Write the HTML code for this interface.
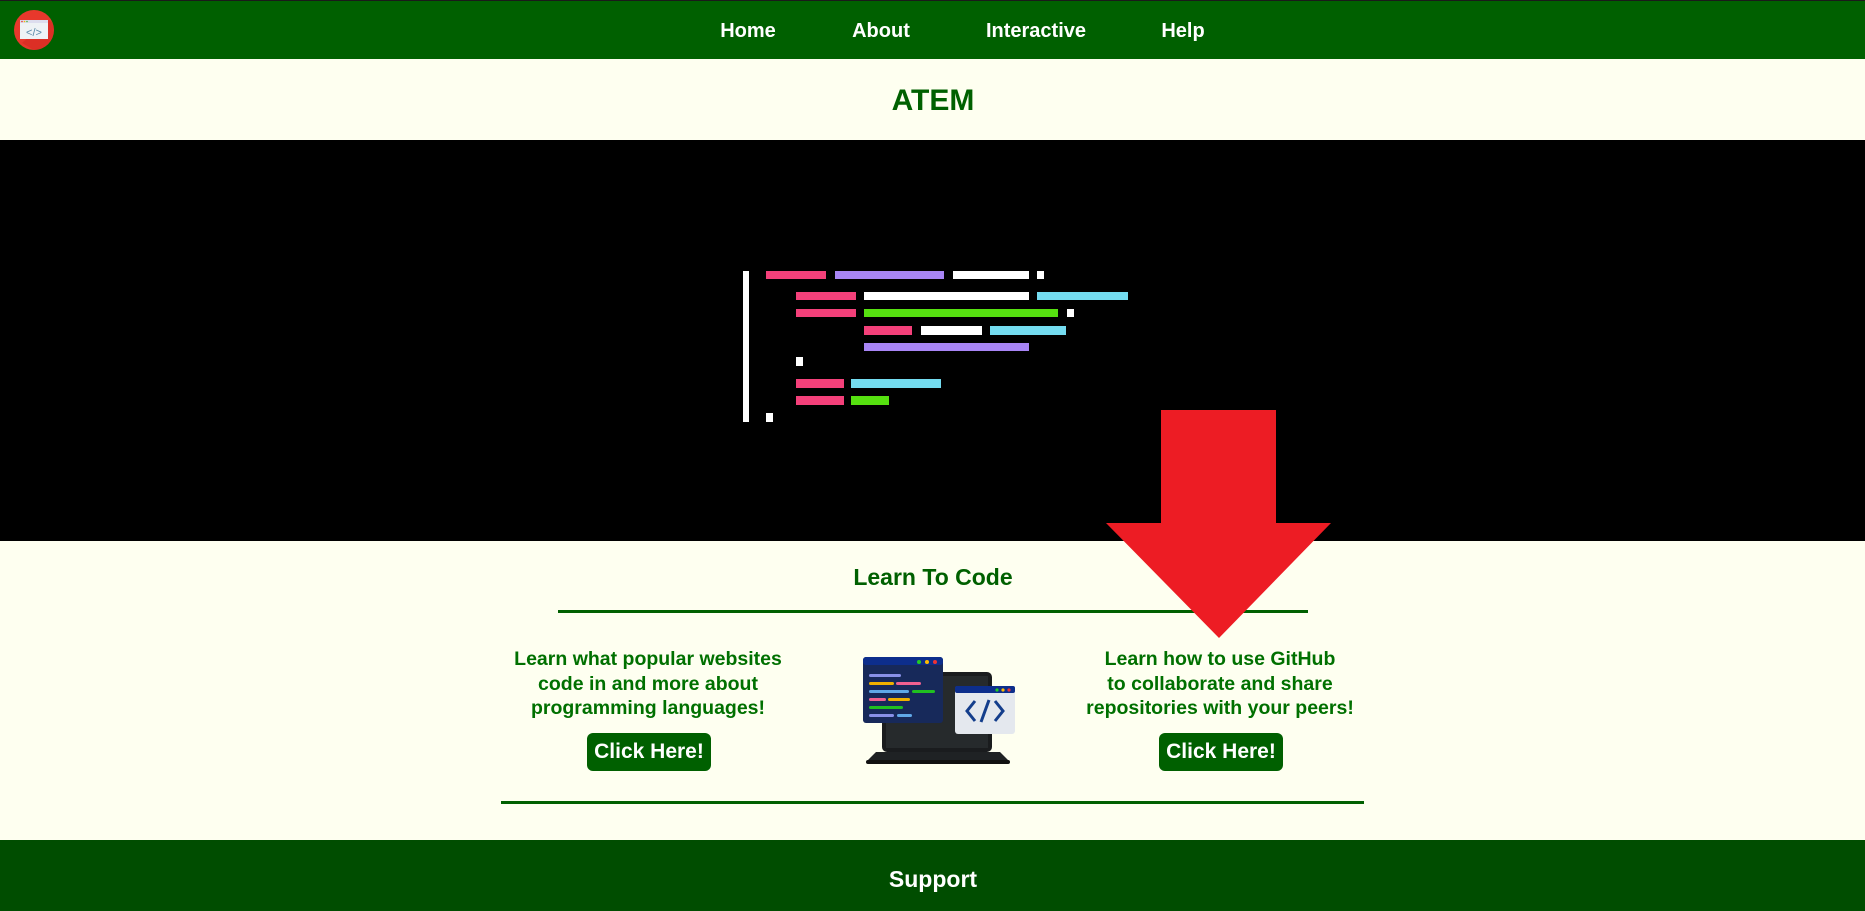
<!DOCTYPE html>
<html><head><meta charset="utf-8"><style>
*{margin:0;padding:0;box-sizing:border-box}
body{width:1865px;height:911px;overflow:hidden;background:#fefff0;font-family:"Liberation Sans",sans-serif;position:relative}
.nav{position:absolute;left:0;top:0;width:1865px;height:59px;background:#006000;border-top:1px solid #1a1a1a}
.nav a{position:absolute;top:19px;color:#fff;font-weight:bold;font-size:20px;text-decoration:none;transform:translateX(-50%)}
.abs{position:absolute}
.c{position:absolute;transform:translateX(-50%);text-align:center;white-space:nowrap}
.t{color:#007000;font-weight:bold;font-size:19.5px;line-height:24.5px}
.btn{position:absolute;background:#006000;color:#fff;font-weight:bold;font-size:21px;border-radius:6px;height:38px;line-height:38px;text-align:center}
</style></head><body>
<div class="nav">
<svg class="abs" style="left:14px;top:9px" width="40" height="40" viewBox="0 0 40 40">
<circle cx="20" cy="20" r="20" fill="#e8382c"/>
<path d="M20 40 A20 20 0 0 0 38 12 L34 10 L8 33 Z" fill="#d42a22" opacity=".6"/>
<rect x="6" y="10" width="28" height="19" fill="#eef2f5"/>
<rect x="6" y="10" width="28" height="3" fill="#dde"/>
<circle cx="8" cy="11.5" r=".8" fill="#e33"/><circle cx="10.5" cy="11.5" r=".8" fill="#fb0"/><circle cx="13" cy="11.5" r=".8" fill="#4b4"/>
<text x="20" y="26" text-anchor="middle" font-size="11" fill="#5a8aa8" font-family="Liberation Sans">&lt;/&gt;</text>
</svg>
<a style="left:748px">Home</a><a style="left:881px">About</a><a style="left:1036px">Interactive</a><a style="left:1183px">Help</a>
</div>
<div class="c" style="left:933px;top:84px;color:#006000;font-weight:bold;font-size:30px">ATEM</div>
<div class="abs" style="left:0;top:140px;width:1865px;height:401px;background:#000"></div>
<svg class="abs" style="left:0;top:0" width="1865" height="911">
<g>
<rect x="743" y="271" width="6" height="151" fill="#fff"/>
<rect x="766" y="271" width="60" height="8" fill="#f4407a"/><rect x="835" y="271" width="109" height="8" fill="#a885f5"/><rect x="953" y="271" width="76" height="8" fill="#fff"/><rect x="1037" y="271" width="7" height="8" fill="#fff"/>
<rect x="796" y="292" width="60" height="8" fill="#f4407a"/><rect x="864" y="292" width="165" height="8" fill="#fff"/><rect x="1037" y="292" width="91" height="8" fill="#74dcf0"/>
<rect x="796" y="309" width="60" height="8" fill="#f4407a"/><rect x="864" y="309" width="194" height="8" fill="#56e010"/><rect x="1067" y="309" width="7" height="8" fill="#fff"/>
<rect x="864" y="326" width="48" height="9" fill="#f4407a"/><rect x="921" y="326" width="61" height="9" fill="#fff"/><rect x="990" y="326" width="76" height="9" fill="#74dcf0"/>
<rect x="864" y="343" width="165" height="8" fill="#a885f5"/>
<rect x="796" y="357" width="7" height="9" fill="#fff"/>
<rect x="796" y="379" width="48" height="9" fill="#f4407a"/><rect x="851" y="379" width="90" height="9" fill="#74dcf0"/>
<rect x="796" y="396" width="48" height="9" fill="#f4407a"/><rect x="851" y="396" width="38" height="9" fill="#56e010"/>
<rect x="766" y="413" width="7" height="9" fill="#fff"/>
</g>
<rect x="558" y="610" width="750" height="3" fill="#006000"/>
<rect x="501" y="801" width="863" height="3" fill="#006000"/>
<!-- laptop -->
<g>
<rect x="882" y="672" width="110" height="80" rx="5" fill="#1a1c1e"/>
<rect x="886" y="676" width="102" height="72" fill="#262a2c"/>
<path d="M868 760 L1008 760 L1000 752 L876 752 Z" fill="#1f2224"/>
<rect x="866" y="760" width="144" height="4" rx="2" fill="#111"/>
<rect x="863" y="657" width="80" height="66" rx="3" fill="#17295a"/>
<rect x="863" y="657" width="80" height="8" rx="3" fill="#0d2e8c"/>
<circle cx="919" cy="662" r="2" fill="#2c2"/><circle cx="927" cy="662" r="2" fill="#fb0"/><circle cx="935" cy="662" r="2" fill="#e33"/>
<rect x="869" y="674" width="32" height="3" rx="1.5" fill="#8890e8"/>
<rect x="869" y="682" width="25" height="3" rx="1.5" fill="#f0b000"/><rect x="896" y="682" width="25" height="3" rx="1.5" fill="#f06090"/>
<rect x="869" y="690" width="40" height="3" rx="1.5" fill="#60a8e8"/><rect x="912" y="690" width="23" height="3" rx="1.5" fill="#20c020"/>
<rect x="869" y="698" width="17" height="3" rx="1.5" fill="#f06090"/><rect x="888" y="698" width="22" height="3" rx="1.5" fill="#f0b000"/>
<rect x="869" y="706" width="34" height="3" rx="1.5" fill="#20c020"/>
<rect x="869" y="714" width="25" height="3" rx="1.5" fill="#8890e8"/><rect x="897" y="714" width="15" height="3" rx="1.5" fill="#60a8e8"/>
<rect x="955" y="686" width="60" height="48" rx="3" fill="#e4e8ee"/>
<rect x="955" y="686" width="60" height="7" rx="2" fill="#0d2e8c"/>
<circle cx="997" cy="690" r="1.6" fill="#2c2"/><circle cx="1003" cy="690" r="1.6" fill="#fb0"/><circle cx="1009" cy="690" r="1.6" fill="#e33"/>
<path d="M975 701 L967 711 L975 721 M995 701 L1003 711 L995 721 M989 700 L981 722" stroke="#143e8c" stroke-width="3" fill="none"/>
</g>
<path d="M1161 410 L1276 410 L1276 523 L1331 523 L1219 638 L1106 523 L1161 523 Z" fill="#ed1c24"/>
</svg>
<div class="c" style="left:933px;top:564px;color:#006000;font-weight:bold;font-size:23px">Learn To Code</div>
<div class="c t" style="left:648px;top:647px">Learn what popular websites<br>code in and more about<br>programming languages!</div>
<div class="btn" style="left:587px;top:733px;width:124px">Click Here!</div>
<div class="c t" style="left:1220px;top:647px">Learn how to use GitHub<br>to collaborate and share<br>repositories with your peers!</div>
<div class="btn" style="left:1159px;top:733px;width:124px">Click Here!</div>
<div class="abs" style="left:0;top:840px;width:1865px;height:71px;background:#004d00"></div>
<div class="c" style="left:933px;top:866px;color:#fff;font-weight:bold;font-size:23px">Support</div>
</body></html>
